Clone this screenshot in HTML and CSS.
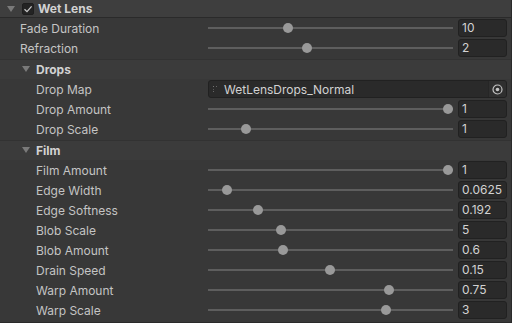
FILE: index.html
```html
<!DOCTYPE html>
<html lang="en">

<head>
    <meta charset="UTF-8">
    <meta name="viewport" content="width=device-width, initial-scale=1.0">
    <title>Wet Lens</title>
    <link rel="stylesheet" href="styles.css">
</head>

<body>
    <div class="panel">
        <div class="header">
            <span class="arrow"></span>
            <span class="check">
                <svg width="10" height="10" viewBox="0 0 10 10"><path d="M1.5 5.2 L4 7.6 L8.6 2.4" fill="none" stroke="#c8c8c8" stroke-width="1.3"/></svg>
            </span>
            <span class="title">Wet Lens</span>
        </div>

        <div class="row">
            <label>Fade Duration</label>
            <input type="range" min="0" max="1000" value="318">
            <div class="num">10</div>
        </div>
        <div class="row">
            <label>Refraction</label>
            <input type="range" min="0" max="1000" value="399">
            <div class="num">2</div>
        </div>

        <div class="section">
            <span class="arrow"></span>
            <span class="title">Drops</span>
        </div>
        <div class="row sub">
            <label>Drop Map</label>
            <div class="object">
                <svg class="tex" width="4" height="6" viewBox="0 0 4 6"><rect x="0" y="0" width="1" height="1" fill="#777"/><rect x="3" y="0" width="1" height="1" fill="#666"/><rect x="0" y="3" width="1" height="1" fill="#555"/><rect x="0" y="5" width="1" height="1" fill="#666"/></svg>
                <span class="name">WetLensDrops_Normal</span>
                <span class="pick">
                    <svg width="11" height="11" viewBox="0 0 11 11"><circle cx="5.5" cy="5.5" r="4.5" fill="none" stroke="#c4c4c4" stroke-width="1.2"/><circle cx="5.5" cy="5.5" r="1.8" fill="#c4c4c4"/></svg>
                </span>
            </div>
        </div>
        <div class="row sub">
            <label>Drop Amount</label>
            <input type="range" min="0" max="1000" value="1000">
            <div class="num">1</div>
        </div>
        <div class="row sub">
            <label>Drop Scale</label>
            <input type="range" min="0" max="1000" value="140">
            <div class="num">1</div>
        </div>

        <div class="section">
            <span class="arrow"></span>
            <span class="title">Film</span>
        </div>
        <div class="row sub">
            <label>Film Amount</label>
            <input type="range" min="0" max="1000" value="1000">
            <div class="num">1</div>
        </div>
        <div class="row sub">
            <label>Edge Width</label>
            <input type="range" min="0" max="1000" value="58">
            <div class="num">0.0625</div>
        </div>
        <div class="row sub">
            <label>Edge Softness</label>
            <input type="range" min="0" max="1000" value="191">
            <div class="num">0.192</div>
        </div>
        <div class="row sub">
            <label>Blob Scale</label>
            <input type="range" min="0" max="1000" value="289">
            <div class="num">5</div>
        </div>
        <div class="row sub">
            <label>Blob Amount</label>
            <input type="range" min="0" max="1000" value="297">
            <div class="num">0.6</div>
        </div>
        <div class="row sub">
            <label>Drain Speed</label>
            <input type="range" min="0" max="1000" value="497">
            <div class="num">0.15</div>
        </div>
        <div class="row sub">
            <label>Warp Amount</label>
            <input type="range" min="0" max="1000" value="748">
            <div class="num">0.75</div>
        </div>
        <div class="row sub">
            <label>Warp Scale</label>
            <input type="range" min="0" max="1000" value="735">
            <div class="num">3</div>
        </div>
    </div>
</body>

</html>
```

FILE: styles.css
```css
* {
    margin: 0;
    padding: 0;
    box-sizing: border-box;
}

body {
    background: #383838;
    font-family: Inter, "Noto Sans", sans-serif;
    font-size: 12px;
    color: #c4c4c4;
}

.panel {
    width: 512px;
    border-right: 1px solid #2a2a2a;
    border-bottom: 1px solid #2a2a2a;
    padding-bottom: 2px;
}

.header {
    display: flex;
    align-items: center;
    height: 18px;
    background: #3e3e3e;
    border-bottom: 1px solid #2a2a2a;
}

.arrow {
    width: 0;
    height: 0;
    border-left: 4px solid transparent;
    border-right: 4px solid transparent;
    border-top: 6px solid #7a7a7a;
}

.header .arrow {
    margin-left: 7px;
}

.check {
    display: flex;
    align-items: center;
    justify-content: center;
    width: 12px;
    height: 12px;
    margin-left: 7px;
    background: #232323;
    border: 1px solid #1e1e1e;
    border-radius: 2px;
}

.title {
    font-weight: bold;
    color: #d2d2d2;
}

.header .title {
    margin-left: 4px;
}

.section {
    display: flex;
    align-items: center;
    height: 20px;
    margin-top: 1px;
    background: #3b3b3b;
    box-shadow: inset 0 1px 0 #323232;
}

.section .arrow {
    margin-left: 22px;
}

.section .title {
    margin-left: 6px;
}

.row {
    display: grid;
    grid-template-columns: 203px 245px 49px;
    column-gap: 5px;
    align-items: center;
    height: 20px;
}

.row label {
    padding-left: 20px;
    white-space: nowrap;
}

.row.sub label {
    padding-left: 36px;
}

input[type=range] {
    -webkit-appearance: none;
    appearance: none;
    width: 245px;
    height: 10px;
    background: transparent;
    outline: none;
}

input[type=range]::-webkit-slider-runnable-track {
    height: 2px;
    background: #5e5e5e;
}

input[type=range]::-webkit-slider-thumb {
    -webkit-appearance: none;
    width: 10px;
    height: 10px;
    margin-top: -4px;
    border-radius: 50%;
    background: #999999;
}

.num {
    height: 18px;
    line-height: 16px;
    padding-left: 3px;
    background: #2a2a2a;
    border: 1px solid #212121;
    border-radius: 3px;
    color: #d2d2d2;
}

.object {
    grid-column: 2 / 4;
    display: flex;
    align-items: center;
    height: 18px;
    background: #2a2a2a;
    border: 1px solid #212121;
    border-radius: 3px;
}

.tex {
    margin-left: 4px;
}

.name {
    flex: 1;
    margin-left: 7px;
    color: #d2d2d2;
}

.pick {
    display: flex;
    align-items: center;
    justify-content: center;
    width: 18px;
    height: 16px;
    background: #2f2f2f;
    border-left: 1px solid #262626;
    border-radius: 0 2px 2px 0;
}
```
